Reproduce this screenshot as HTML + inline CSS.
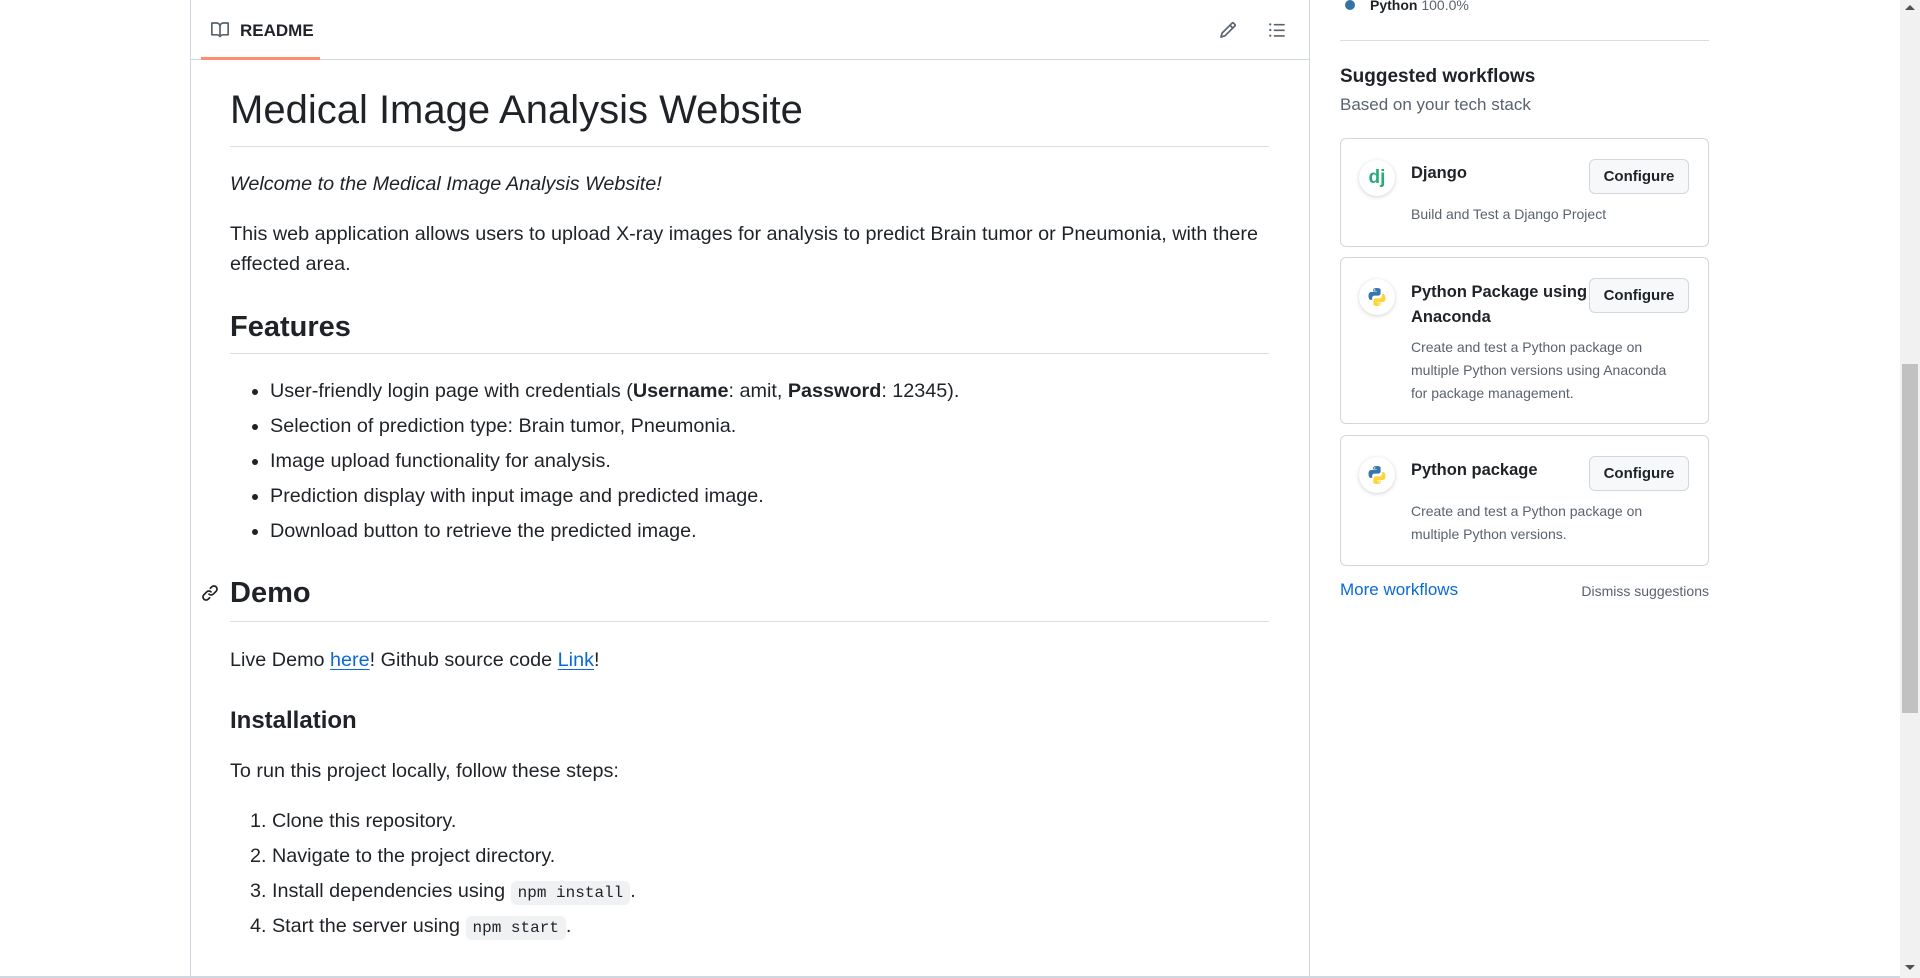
<!DOCTYPE html>
<html><head><meta charset="utf-8"><style>
*{box-sizing:border-box;margin:0;padding:0}
body{width:1920px;height:978px;overflow:hidden;background:#fff;font-family:"Liberation Sans",sans-serif;color:#1f2328;position:relative}
.a{position:absolute;white-space:nowrap}
.box{position:absolute;left:190px;top:-2px;width:1120px;height:980px;border:1px solid #d0d7de;border-top:none}
.hr{position:absolute;height:1px;background:#d8dee4}
.b{font-size:19.8px}
.li::before{content:"";position:absolute;left:-18px;top:9px;width:6px;height:6px;border-radius:50%;background:#1f2328}
code{font-family:"Liberation Mono",monospace;font-size:16px;background:#eff1f3;border-radius:6px;padding:3px 7px}
a{color:#0969da;text-decoration:underline;text-underline-offset:3px}
.card{position:absolute;left:1340px;width:369px;border:1px solid #d0d7de;border-radius:6px}
.ic{position:absolute;left:18px;width:36px;height:36px;border-radius:50%;background:#fff;box-shadow:0 1px 4px rgba(0,0,0,.18);display:flex;align-items:center;justify-content:center}
.t{position:absolute;left:70px;font-size:16.5px;font-weight:bold;color:#1f2328;line-height:25px}
.d{position:absolute;left:70px;font-size:14px;color:#59636e;line-height:23px}
.btn{position:absolute;left:248px;width:100px;height:35px;border:1px solid #d0d7de;border-radius:6px;background:#f6f8fa;font-size:15px;font-weight:bold;display:flex;align-items:center;justify-content:center;color:#1f2328}
</style></head><body>
<div class="box"></div>
<div class="a" style="left:190px;top:59px;width:1120px;height:1px;background:#d0d7de"></div>
<div class="a" style="left:201px;top:57px;width:119px;height:3px;background:#fd8c73"></div>
<svg class="a" style="left:210px;top:21px" width="20" height="18" viewBox="0 0 16 16"><path fill="#59636e" d="M0 1.75A.75.75 0 0 1 .75 1h4.253c1.227 0 2.317.59 3 1.501A3.743 3.743 0 0 1 11.006 1h4.245a.75.75 0 0 1 .75.75v10.5a.75.75 0 0 1-.75.75h-4.507a2.25 2.25 0 0 0-1.591.659l-.622.621a.75.75 0 0 1-1.06 0l-.622-.621A2.25 2.25 0 0 0 5.258 13H.75a.75.75 0 0 1-.75-.75Zm7.251 10.324.004-5.073-.002-2.253A2.25 2.25 0 0 0 5.003 2.5H1.5v9h3.757a3.75 3.75 0 0 1 1.994.574ZM8.755 4.75l-.004 7.322a3.752 3.752 0 0 1 1.992-.572H14.5v-9h-3.495a2.25 2.25 0 0 0-2.25 2.25Z"/></svg>
<div class="a" style="left:240px;top:21px;font-size:17px;font-weight:bold;color:#1f2328">README</div>
<svg class="a" style="left:1219px;top:21px" width="18" height="18" viewBox="0 0 16 16"><path fill="#59636e" d="M11.013 1.427a1.750 1.750 0 0 1 2.474 0l1.086 1.086a1.75 1.75 0 0 1 0 2.474l-8.61 8.61c-.21.21-.47.364-.756.445l-3.251.93a.75.75 0 0 1-.927-.928l.929-3.25c.081-.286.235-.547.445-.758l8.61-8.61Zm.176 4.823L9.75 4.81l-6.286 6.287a.253.253 0 0 0-.064.108l-.558 1.953 1.953-.558a.253.253 0 0 0 .108-.064Zm1.238-3.763a.25.25 0 0 0-.354 0L10.811 3.75l1.439 1.44 1.263-1.263a.25.25 0 0 0 0-.354Z"/></svg>
<svg class="a" style="left:1268px;top:21px" width="18" height="18" viewBox="0 0 16 16"><path fill="#59636e" d="M5.750 2.5h8.5a.75.75 0 0 1 0 1.5h-8.5a.75.75 0 0 1 0-1.5Zm0 5h8.5a.75.75 0 0 1 0 1.5h-8.5a.75.75 0 0 1 0-1.5Zm0 5h8.5a.75.75 0 0 1 0 1.5h-8.5a.75.75 0 0 1 0-1.5ZM2 14a1 1 0 1 1 0-2 1 1 0 0 1 0 2Zm1-6a1 1 0 1 1-2 0 1 1 0 0 1 2 0ZM2 4a1 1 0 1 1 0-2 1 1 0 0 1 0 2Z"/></svg>

<div class="a" style="left:230px;top:88px;font-size:40px">Medical Image Analysis Website</div>
<div class="hr" style="left:230px;top:146px;width:1039px"></div>
<div class="a b" style="left:230px;top:173px;font-style:italic">Welcome to the Medical Image Analysis Website!</div>
<div class="a b" style="left:230px;top:223px">This web application allows users to upload X-ray images for analysis to predict Brain tumor or Pneumonia, with there</div>
<div class="a b" style="left:230px;top:253px">effected area.</div>
<div class="a" style="left:230px;top:311px;font-size:29px;font-weight:600">Features</div>
<div class="hr" style="left:230px;top:353px;width:1039px"></div>
<div class="a b li" style="left:270px;top:380px">User-friendly login page with credentials (<b>Username</b>: amit, <b>Password</b>: 12345).</div>
<div class="a b li" style="left:270px;top:415px">Selection of prediction type: Brain tumor, Pneumonia.</div>
<div class="a b li" style="left:270px;top:450px">Image upload functionality for analysis.</div>
<div class="a b li" style="left:270px;top:485px">Prediction display with input image and predicted image.</div>
<div class="a b li" style="left:270px;top:520px">Download button to retrieve the predicted image.</div>
<svg class="a" style="left:201px;top:584px" width="18" height="18" viewBox="0 0 16 16"><path fill="#1f2328" d="m7.775 3.275 1.25-1.25a3.5 3.5 0 1 1 4.950 4.950l-2.5 2.5a3.5 3.5 0 0 1-4.950 0 .751.751 0 0 1 .018-1.042.751.751 0 0 1 1.042-.018 1.998 1.998 0 0 0 2.830 0l2.5-2.5a2.002 2.002 0 0 0-2.830-2.830l-1.25 1.250a.751.751 0 0 1-1.042-.018.751.751 0 0 1-.018-1.042Zm-4.690 9.640a1.998 1.998 0 0 0 2.830 0l1.250-1.250a.751.751 0 0 1 1.042.018.751.751 0 0 1 .018 1.042l-1.250 1.250a3.5 3.5 0 1 1-4.950-4.950l2.5-2.5a3.5 3.5 0 0 1 4.950 0 .751.751 0 0 1-.018 1.042.751.751 0 0 1-1.042.018 1.998 1.998 0 0 0-2.830 0l-2.5 2.5a1.998 1.998 0 0 0 0 2.830Z"/></svg>
<div class="a" style="left:230px;top:577px;font-size:29px;font-weight:600">Demo</div>
<div class="hr" style="left:230px;top:621px;width:1039px"></div>
<div class="a b" style="left:230px;top:649px">Live Demo <a>here</a>! Github source code <a>Link</a>!</div>
<div class="a" style="left:230px;top:707px;font-size:24px;font-weight:600">Installation</div>
<div class="a b" style="left:230px;top:760px">To run this project locally, follow these steps:</div>
<div class="a b" style="left:250px;top:810px">1. Clone this repository.</div>
<div class="a b" style="left:250px;top:845px">2. Navigate to the project directory.</div>
<div class="a b" style="left:250px;top:880px">3. Install dependencies using <code>npm install</code>.</div>
<div class="a b" style="left:250px;top:915px">4. Start the server using <code>npm start</code>.</div>
<div class="a" style="left:0;top:976px;width:1900px;height:2px;background:#d0d7de"></div>

<div class="a" style="left:1345px;top:0px;width:10px;height:10px;border-radius:50%;background:#3572a5"></div>
<div class="a" style="left:1370px;top:-3px;font-size:14px;font-weight:bold;color:#1f2328">Python <span style="font-weight:normal;color:#59636e">100.0%</span></div>
<div class="hr" style="left:1340px;top:40px;width:369px"></div>
<div class="a" style="left:1340px;top:66px;font-size:19px;font-weight:600">Suggested workflows</div>
<div class="a" style="left:1340px;top:95px;font-size:17px;color:#59636e">Based on your tech stack</div>

<div class="card" style="top:138px;height:109px">
<div class="ic" style="top:21px"><span style="color:#2ba977;font-weight:bold;font-size:19px">dj</span></div>
<div class="t" style="top:22px">Django</div>
<div class="btn" style="top:20px">Configure</div>
<div class="d" style="top:64px">Build and Test a Django Project</div>
</div>
<div class="card" style="top:257px;height:167px">
<div class="ic" style="top:21px"><svg width="20" height="20" viewBox="0 0 20 20"><path fill="#3776ab" d="M9.8 1C6 1 6.2 2.7 6.2 2.7v1.8h3.7V5H4.2S1.5 4.7 1.5 8.9s2.3 4 2.3 4h1.4v-2s-.1-2.3 2.3-2.3h3.9s2.2 0 2.2-2.2V2.9S14 1 9.8 1zM7.7 2.2a.7.7 0 1 1 0 1.4.7.7 0 0 1 0-1.4z"/><path fill="#ffd43b" d="M10.2 19c3.8 0 3.6-1.7 3.6-1.7v-1.8h-3.7V15h5.7s2.7.3 2.7-3.9-2.3-4-2.3-4h-1.4v2s.1 2.3-2.3 2.3H8.6s-2.2 0-2.2 2.2v3.5S6 19 10.2 19zm2.1-1.2a.7.7 0 1 1 0-1.4.7.7 0 0 1 0 1.4z"/></svg></div>
<div class="t" style="top:22px">Python Package using<br>Anaconda</div>
<div class="btn" style="top:20px">Configure</div>
<div class="d" style="top:78px">Create and test a Python package on<br>multiple Python versions using Anaconda<br>for package management.</div>
</div>
<div class="card" style="top:435px;height:131px">
<div class="ic" style="top:21px"><svg width="20" height="20" viewBox="0 0 20 20"><path fill="#3776ab" d="M9.8 1C6 1 6.2 2.7 6.2 2.7v1.8h3.7V5H4.2S1.5 4.7 1.5 8.9s2.3 4 2.3 4h1.4v-2s-.1-2.3 2.3-2.3h3.9s2.2 0 2.2-2.2V2.9S14 1 9.8 1zM7.7 2.2a.7.7 0 1 1 0 1.4.7.7 0 0 1 0-1.4z"/><path fill="#ffd43b" d="M10.2 19c3.8 0 3.6-1.7 3.6-1.7v-1.8h-3.7V15h5.7s2.7.3 2.7-3.9-2.3-4-2.3-4h-1.4v2s.1 2.3-2.3 2.3H8.6s-2.2 0-2.2 2.2v3.5S6 19 10.2 19zm2.1-1.2a.7.7 0 1 1 0-1.4.7.7 0 0 1 0 1.4z"/></svg></div>
<div class="t" style="top:22px">Python package</div>
<div class="btn" style="top:20px">Configure</div>
<div class="d" style="top:64px">Create and test a Python package on<br>multiple Python versions.</div>
</div>
<div class="a" style="left:1340px;top:580px;font-size:17px;color:#0969da">More workflows</div>
<div class="a" style="left:1570px;top:583px;width:139px;text-align:right;font-size:14px;color:#59636e">Dismiss suggestions</div>

<div class="a" style="left:1900px;top:0;width:20px;height:978px;background:#f1f1f1"></div>
<div class="a" style="left:1902px;top:364px;width:16px;height:349px;background:#c1c1c1"></div>
<div class="a" style="left:1905px;top:5px;width:0;height:0;border-left:5px solid transparent;border-right:5px solid transparent;border-bottom:5px solid #505050"></div>
<div class="a" style="left:1905px;top:965px;width:0;height:0;border-left:5px solid transparent;border-right:5px solid transparent;border-top:5px solid #505050"></div>
</body></html>
